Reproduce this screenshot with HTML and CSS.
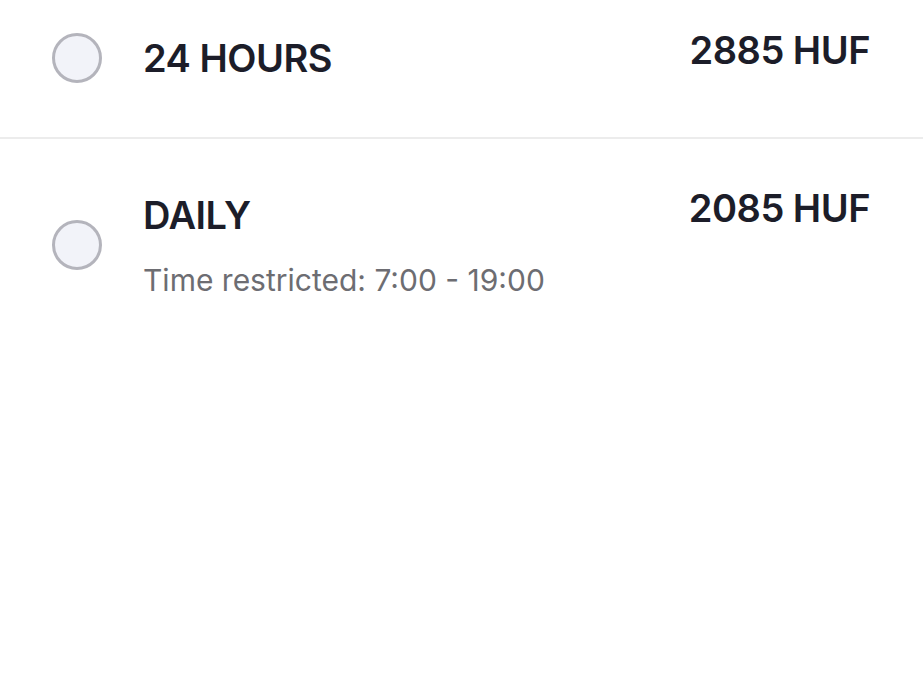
FILE: index.html
```html
<!DOCTYPE html>
<html>
	<head>
		<meta charset="UTF-8">
		<title>Tickets</title>
		<link rel="stylesheet" href="styles.css">
	</head>

	<body>
		<main class="options">
			<label class="option first">
				<span class="radio"></span>
				<span class="info">
					<span class="name">24 HOURS</span>
				</span>
				<span class="price">2885 HUF</span>
			</label>
			<label class="option">
				<span class="radio"></span>
				<span class="info">
					<span class="name">DAILY</span>
					<span class="note">Time restricted: 7:00 - 19:00</span>
				</span>
				<span class="price">2085 HUF</span>
			</label>
		</main>
	</body>
</html>
```

FILE: styles.css
```css
body {
    font-family: Inter, "Noto Sans", sans-serif;
    margin: 0; padding: 0;
    background: #fff;
    color: #1c1d29;
}

.options {
    display: flex;
    flex-direction: column;
}

.option {
    display: flex;
    align-items: center;
    padding: 52px 53px 40px 52px;
}

.option.first {
    padding-top: 33px;
    padding-bottom: 54px;
    border-bottom: 2px solid #ececec;
}

.radio {
    flex: none;
    width: 50px; height: 50px;
    box-sizing: border-box;
    border: 3px solid #b4b4bc;
    border-radius: 50%;
    background: #f2f3f9;
    margin-right: 41px;
}

.info {
    flex: 1;
    display: flex;
    flex-direction: column;
}

.name, .price {
    font-size: 38px;
    font-weight: 600;
    letter-spacing: -0.5px;
    line-height: 48px;
}

.price {
    align-self: flex-start;
    margin-top: -7px;
}

.note {
    margin-top: 23px;
    font-size: 30px;
    line-height: 36px;
    color: #6d6d72;
}
```
